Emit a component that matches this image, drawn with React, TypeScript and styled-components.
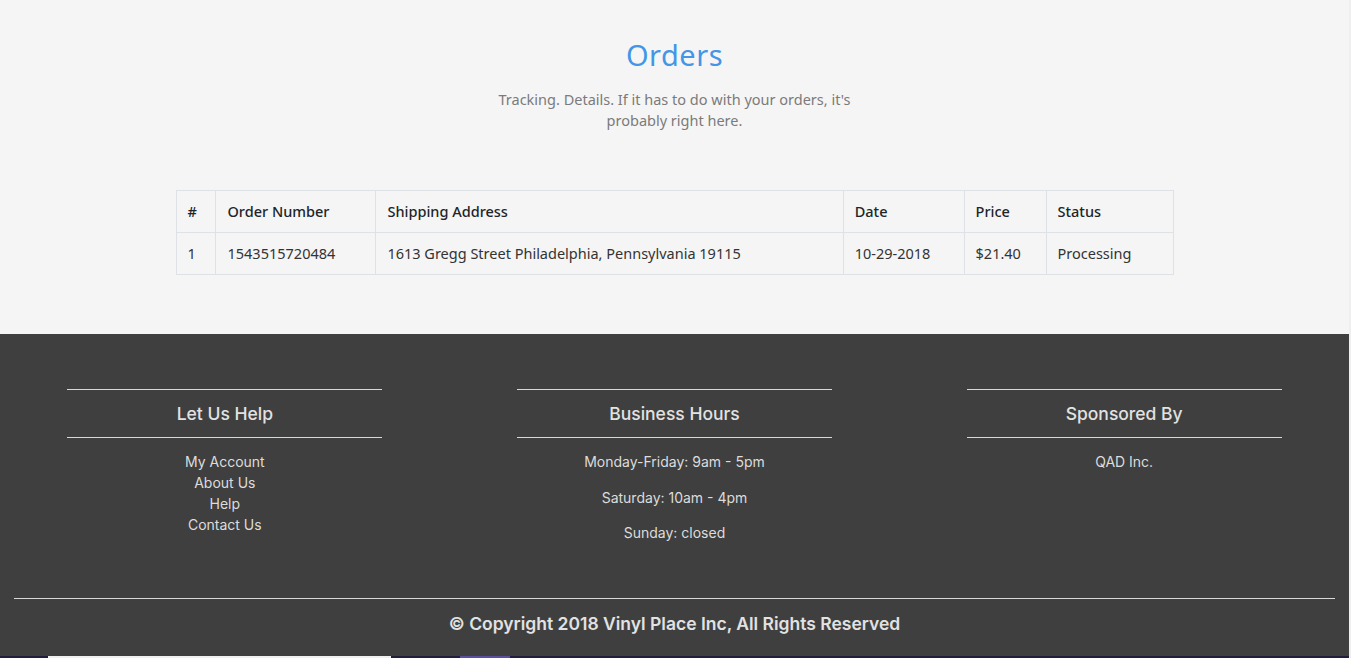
import styled, { createGlobalStyle } from 'styled-components';

const GlobalStyle = createGlobalStyle`
  html, body {
    margin: 0;
    padding: 0;
    background: #efefef;
  }
  * {
    box-sizing: border-box;
  }
`;

const Page = styled.div`
  width: 1349px;
  font-family: 'Noto Sans', 'DejaVu Sans', sans-serif;
`;

const Main = styled.main`
  background: #f5f5f5;
  padding: 36px 0 59px;
`;

const Header = styled.header`
  display: flex;
  flex-direction: column;
  align-items: center;
  text-align: center;
`;

const Title = styled.h1`
  margin: 0;
  font-size: 29px;
  font-weight: 400;
  line-height: 38px;
  color: #4495e6;
  letter-spacing: 0.5px;
`;

const Subtitle = styled.p`
  margin: 15px 0 0;
  width: 390px;
  font-size: 14.5px;
  line-height: 21px;
  color: #7b7b7b;
`;

const Table = styled.table`
  margin: 59px auto 0;
  width: 998px;
  border-collapse: collapse;
  font-size: 14.5px;
  color: #212529;
`;

const Th = styled.th<{ $w: number }>`
  width: ${(p) => p.$w}px;
  height: 42px;
  padding: 0 11px 1px;
  border: 1px solid #dee2e6;
  text-align: left;
  font-weight: 500;
`;

const Td = styled.td`
  height: 42px;
  padding: 0 11px 1px;
  border: 1px solid #dee2e6;
  color: #333;
`;

const Footer = styled.footer`
  background: #3f3f3f;
  color: #dcdcdc;
  padding: 55px 14px 0;
  font-family: 'Inter', 'Noto Sans', sans-serif;
`;

const Columns = styled.div`
  display: grid;
  grid-template-columns: repeat(3, 1fr);
  margin: 0 -14px;
`;

const Column = styled.section`
  display: flex;
  flex-direction: column;
  align-items: center;
`;

const ColumnTitle = styled.h3`
  width: 70%;
  margin: 0;
  padding: 11px 0 10px;
  border-top: 1px solid #d8d8d8;
  border-bottom: 1px solid #d8d8d8;
  text-align: center;
  font-size: 17.5px;
  font-weight: 500;
  line-height: 26px;
  color: #e2e2e2;
`;

const LinkList = styled.ul`
  list-style: none;
  margin: 13px 0 0;
  padding: 0;
  text-align: center;
  font-size: 14px;
  line-height: 21px;
`;

const FooterLink = styled.a`
  color: #dcdcdc;
  text-decoration: none;
`;

const HoursLine = styled.p`
  margin: 0;
  font-size: 14px;
  line-height: 21px;
  text-align: center;
  & + & {
    margin-top: 14.5px;
  }
  &:first-child {
    margin-top: 13px;
  }
`;

const Hours = styled.div``;

const Copyright = styled.div`
  margin-top: 55px;
  border-top: 1px solid #d8d8d8;
  padding: 13px 0 20px;
  text-align: center;
  font-size: 17.5px;
  font-weight: 600;
  line-height: 24px;
  color: #e2e2e2;
`;

const Strip = styled.div`
  display: flex;
  height: 2px;
  background: #201e3c;
`;

const StripPart = styled.span<{ $w: number; $c: string; $ml?: number }>`
  width: ${(p) => p.$w}px;
  margin-left: ${(p) => p.$ml ?? 0}px;
  background: ${(p) => p.$c};
`;

const columns = [
  { label: '#', w: 40 },
  { label: 'Order Number', w: 160 },
  { label: 'Shipping Address', w: 468 },
  { label: 'Date', w: 121 },
  { label: 'Price', w: 82 },
  { label: 'Status', w: 127 },
];

const orders = [
  {
    id: 1,
    number: '1543515720484',
    address: '1613 Gregg Street Philadelphia, Pennsylvania 19115',
    date: '10-29-2018',
    price: '$21.40',
    status: 'Processing',
  },
];

export default function App() {
  return (
    <Page>
      <GlobalStyle />
      <Main>
        <Header>
          <Title>Orders</Title>
          <Subtitle>
            Tracking. Details. If it has to do with your orders, it's probably right here.
          </Subtitle>
        </Header>
        <Table>
          <thead>
            <tr>
              {columns.map((c) => (
                <Th key={c.label} $w={c.w}>
                  {c.label}
                </Th>
              ))}
            </tr>
          </thead>
          <tbody>
            {orders.map((o) => (
              <tr key={o.id}>
                <Td>{o.id}</Td>
                <Td>{o.number}</Td>
                <Td>{o.address}</Td>
                <Td>{o.date}</Td>
                <Td>{o.price}</Td>
                <Td>{o.status}</Td>
              </tr>
            ))}
          </tbody>
        </Table>
      </Main>
      <Footer>
        <Columns>
          <Column>
            <ColumnTitle>Let Us Help</ColumnTitle>
            <LinkList>
              <li><FooterLink href="#">My Account</FooterLink></li>
              <li><FooterLink href="#">About Us</FooterLink></li>
              <li><FooterLink href="#">Help</FooterLink></li>
              <li><FooterLink href="#">Contact Us</FooterLink></li>
            </LinkList>
          </Column>
          <Column>
            <ColumnTitle>Business Hours</ColumnTitle>
            <Hours>
              <HoursLine>Monday-Friday: 9am - 5pm</HoursLine>
              <HoursLine>Saturday: 10am - 4pm</HoursLine>
              <HoursLine>Sunday: closed</HoursLine>
            </Hours>
          </Column>
          <Column>
            <ColumnTitle>Sponsored By</ColumnTitle>
            <LinkList>
              <li>QAD Inc.</li>
            </LinkList>
          </Column>
        </Columns>
        <Copyright>© Copyright 2018 Vinyl Place Inc, All Rights Reserved</Copyright>
      </Footer>
      <Strip>
        <StripPart $w={343} $ml={48} $c="#f0f0f0" />
        <StripPart $w={50} $ml={69} $c="#5a4fa0" />
      </Strip>
    </Page>
  );
}
